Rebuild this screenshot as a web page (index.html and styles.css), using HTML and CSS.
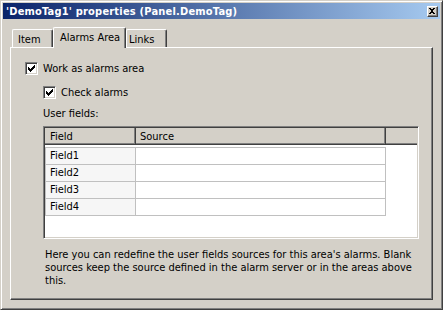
FILE: index.html
```html
<!DOCTYPE html>
<html>
<head>
<meta charset="utf-8">
<link rel="stylesheet" href="styles.css">
</head>
<body>
<div class="window">
  <div class="titlebar">
    <span class="title">'DemoTag1' properties (Panel.DemoTag)</span>
    <span class="close">
      <svg width="6" height="6" viewBox="0 0 6 6" shape-rendering="crispEdges" fill="#000">
        <rect x="0" y="0" width="2" height="1"/><rect x="4" y="0" width="2" height="1"/>
        <rect x="1" y="1" width="4" height="1"/>
        <rect x="2" y="2" width="2" height="2"/>
        <rect x="1" y="4" width="4" height="1"/>
        <rect x="0" y="5" width="2" height="1"/><rect x="4" y="5" width="2" height="1"/>
      </svg>
    </span>
  </div>
  <div class="client">
    <div class="tabs">
      <div class="tab tab-item">Item</div>
      <div class="tab tab-active">Alarms Area</div>
      <div class="tab tab-links">Links</div>
    </div>
    <div class="panel">
      <div class="check">
        <span class="box">
          <svg width="7" height="7" viewBox="0 0 7 7" shape-rendering="crispEdges" fill="#000">
            <rect x="6" y="0" width="1" height="1"/>
            <rect x="5" y="1" width="2" height="1"/>
            <rect x="0" y="2" width="1" height="1"/><rect x="4" y="2" width="3" height="1"/>
            <rect x="0" y="3" width="2" height="1"/><rect x="3" y="3" width="3" height="1"/>
            <rect x="0" y="4" width="5" height="1"/>
            <rect x="1" y="5" width="3" height="1"/>
            <rect x="2" y="6" width="1" height="1"/>
          </svg>
        </span>
        <span class="label">Work as alarms area</span>
      </div>
      <div class="indent">
        <div class="check">
          <span class="box">
            <svg width="7" height="7" viewBox="0 0 7 7" shape-rendering="crispEdges" fill="#000">
              <rect x="6" y="0" width="1" height="1"/>
              <rect x="5" y="1" width="2" height="1"/>
              <rect x="0" y="2" width="1" height="1"/><rect x="4" y="2" width="3" height="1"/>
              <rect x="0" y="3" width="2" height="1"/><rect x="3" y="3" width="3" height="1"/>
              <rect x="0" y="4" width="5" height="1"/>
              <rect x="1" y="5" width="3" height="1"/>
              <rect x="2" y="6" width="1" height="1"/>
            </svg>
          </span>
          <span class="label">Check alarms</span>
        </div>
        <div class="caption">User fields:</div>
        <div class="grid">
          <div class="ghead">
            <div class="hc c1">Field</div>
            <div class="hc c2">Source</div>
            <div class="hc c3"></div>
          </div>
          <div class="gbody">
            <div class="rows">
              <div class="grow"><div class="gc c1">Field1</div><div class="gc c2"></div></div>
              <div class="grow"><div class="gc c1">Field2</div><div class="gc c2"></div></div>
              <div class="grow"><div class="gc c1">Field3</div><div class="gc c2"></div></div>
              <div class="grow"><div class="gc c1">Field4</div><div class="gc c2"></div></div>
            </div>
          </div>
        </div>
        <p class="note">Here you can redefine the user fields sources for this area's alarms. Blank<br>sources keep the source defined in the alarm server or in the areas above<br>this.</p>
      </div>
    </div>
  </div>
</div>
</body>
</html>
```

FILE: styles.css
```css
html, body {
  margin: 0;
  padding: 0;
  background: #d4d0c8;
}
body {
  font-family: "DejaVu Sans Condensed", "Liberation Sans", sans-serif;
  font-size: 11px;
  color: #000;
}
.window {
  width: 443px;
  height: 310px;
  box-sizing: border-box;
  border: 1px solid;
  border-color: #d4d0c8 #404040 #404040 #d4d0c8;
  box-shadow: inset 1px 1px #fff, inset -1px -1px #808080;
  padding: 2px;
  display: flex;
  flex-direction: column;
}
.titlebar {
  height: 16px;
  flex: none;
  background: linear-gradient(to right, #0a246a, #a6caf0);
  display: flex;
  align-items: center;
  justify-content: space-between;
  padding: 0 2px 0 3px;
  color: #fff;
  font-weight: bold;
}
.title {
  line-height: 13px;
  letter-spacing: 0.2px;
  white-space: nowrap;
}
.close {
  width: 11px;
  height: 11px;
  box-sizing: border-box;
  background: #d4d0c8;
  border: 1px solid;
  border-color: #fff #404040 #404040 #fff;
  box-shadow: inset -1px -1px #808080;
  display: flex;
  align-items: center;
  justify-content: center;
  padding: 0 1px 1px 0;
}
.close svg {
  display: block;
}
.client {
  flex: 1;
  display: flex;
  flex-direction: column;
  padding: 8px 7px 7px 7px;
}
.tabs {
  height: 20px;
  flex: none;
  display: flex;
  align-items: flex-end;
  padding-left: 2px;
  position: relative;
  z-index: 1;
}
.tab {
  box-sizing: border-box;
  height: 18px;
  border: 1px solid;
  border-bottom: 0;
  border-color: #fff #404040 #fff #fff;
  box-shadow: inset -1px 0 #808080;
  border-radius: 2px 2px 0 0;
  padding-top: 3px;
  line-height: 13px;
  background: #d4d0c8;
  white-space: nowrap;
}
.tab-item {
  width: 41px;
  padding-left: 5px;
}
.tab-active {
  width: 73px;
  height: 21px;
  margin-bottom: -1px;
  padding-left: 6px;
  padding-top: 3px;
}
.tab-links {
  width: 41px;
  padding-left: 2px;
}
.panel {
  flex: 1;
  border: 1px solid;
  border-color: #fff #404040 #404040 #fff;
  box-shadow: inset -1px -1px #808080;
  padding: 14px 0 0 14px;
  display: flex;
  flex-direction: column;
}
.check {
  display: flex;
  align-items: center;
  height: 13px;
  gap: 5px;
}
.box {
  width: 13px;
  height: 13px;
  box-sizing: border-box;
  background: #fff;
  border: 1px solid;
  border-color: #808080 #fff #fff #808080;
  box-shadow: inset 1px 1px #404040, inset -1px -1px #d4d0c8;
  display: flex;
  align-items: center;
  justify-content: center;
}
.box svg {
  display: block;
}
.label {
  line-height: 13px;
  white-space: nowrap;
}
.indent {
  margin-left: 18px;
  margin-top: 11px;
  display: flex;
  flex-direction: column;
}
.caption {
  margin-top: 8px;
  line-height: 13px;
}
.grid {
  margin-top: 6px;
  width: 376px;
  height: 113px;
  box-sizing: border-box;
  border: 1px solid;
  border-color: #808080 #fff #fff #808080;
  box-shadow: inset 1px 1px #404040, inset -1px -1px #d4d0c8;
  padding: 1px;
  display: flex;
  flex-direction: column;
}
.ghead {
  display: flex;
  height: 17px;
  flex: none;
  background: #d4d0c8;
}
.hc {
  box-sizing: border-box;
  height: 17px;
  padding-top: 2px;
  line-height: 13px;
  border-bottom: 1px solid #404040;
  box-shadow: inset 0 -1px #808080;
  white-space: nowrap;
}
.hc.c1 {
  width: 91px;
  padding-left: 5px;
  border-right: 1px solid #404040;
  box-shadow: inset -1px -1px #808080;
}
.hc.c2 {
  width: 250px;
  padding-left: 4px;
  border-right: 1px solid #404040;
  box-shadow: inset -1px -1px #808080;
}
.hc.c3 {
  flex: 1;
}
.gbody {
  flex: 1;
  background: #fff;
  padding-top: 2px;
}
.rows {
  width: 341px;
  box-sizing: border-box;
  border: 1px solid #c0c0c0;
  border-top: 0;
}
.grow {
  display: flex;
  height: 17px;
  box-sizing: border-box;
  border-top: 1px solid #c0c0c0;
}
.gc {
  line-height: 16px;
  white-space: nowrap;
}
.gc.c1 {
  width: 90px;
  padding-left: 4px;
  box-sizing: border-box;
  background: #f6f6f6;
  border-right: 1px solid #c0c0c0;
}
.gc.c2 {
  flex: 1;
  background: #fff;
}
.note {
  margin: 9px 0 0 2px;
  line-height: 13px;
  white-space: nowrap;
}
```
